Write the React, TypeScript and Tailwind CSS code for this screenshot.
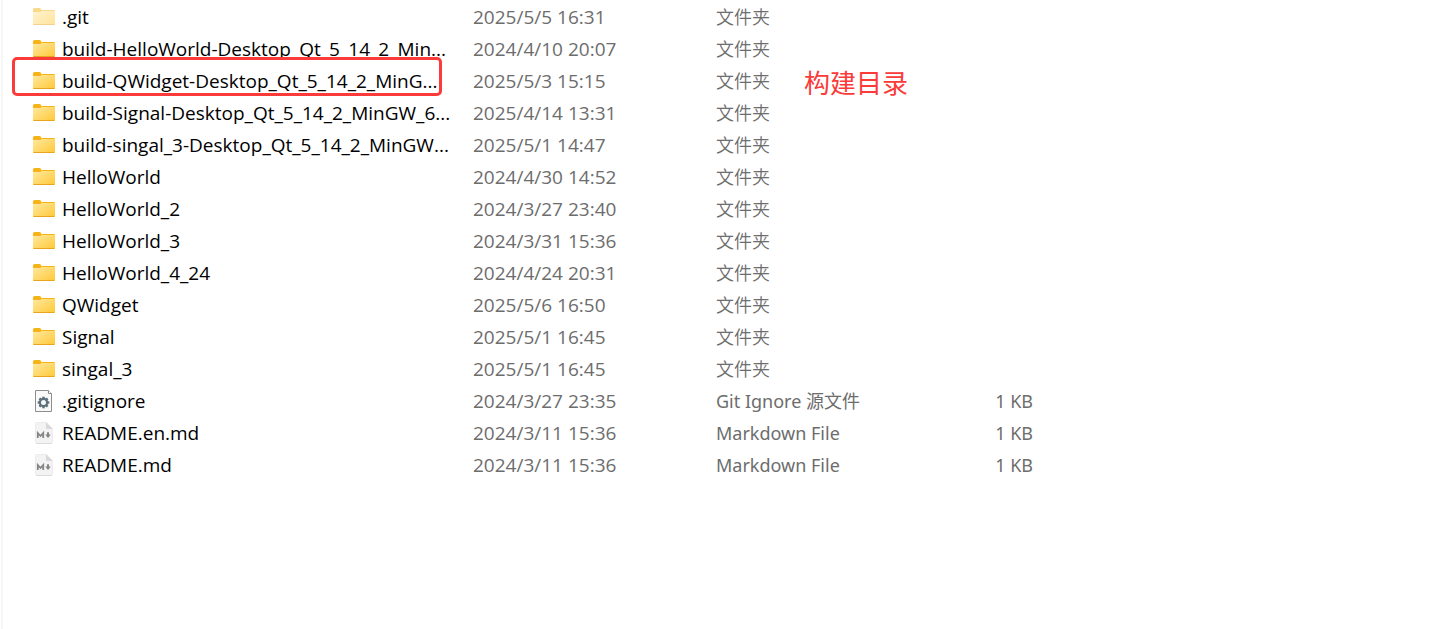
type Kind = "hidden-folder" | "folder" | "config" | "markdown";

interface Entry {
  name: string;
  date: string;
  type: string;
  size?: string;
  kind: Kind;
  note?: string;
}

const entries: Entry[] = [
  { name: ".git", date: "2025/5/5 16:31", type: "文件夹", kind: "hidden-folder" },
  { name: "build-HelloWorld-Desktop_Qt_5_14_2_Min...", date: "2024/4/10 20:07", type: "文件夹", kind: "folder" },
  { name: "build-QWidget-Desktop_Qt_5_14_2_MinG...", date: "2025/5/3 15:15", type: "文件夹", kind: "folder", note: "构建目录" },
  { name: "build-Signal-Desktop_Qt_5_14_2_MinGW_6...", date: "2025/4/14 13:31", type: "文件夹", kind: "folder" },
  { name: "build-singal_3-Desktop_Qt_5_14_2_MinGW...", date: "2025/5/1 14:47", type: "文件夹", kind: "folder" },
  { name: "HelloWorld", date: "2024/4/30 14:52", type: "文件夹", kind: "folder" },
  { name: "HelloWorld_2", date: "2024/3/27 23:40", type: "文件夹", kind: "folder" },
  { name: "HelloWorld_3", date: "2024/3/31 15:36", type: "文件夹", kind: "folder" },
  { name: "HelloWorld_4_24", date: "2024/4/24 20:31", type: "文件夹", kind: "folder" },
  { name: "QWidget", date: "2025/5/6 16:50", type: "文件夹", kind: "folder" },
  { name: "Signal", date: "2025/5/1 16:45", type: "文件夹", kind: "folder" },
  { name: "singal_3", date: "2025/5/1 16:45", type: "文件夹", kind: "folder" },
  { name: ".gitignore", date: "2024/3/27 23:35", type: "Git Ignore 源文件", size: "1 KB", kind: "config" },
  { name: "README.en.md", date: "2024/3/11 15:36", type: "Markdown File", size: "1 KB", kind: "markdown" },
  { name: "README.md", date: "2024/3/11 15:36", type: "Markdown File", size: "1 KB", kind: "markdown" },
];

function FolderIcon({ faded }: { faded: boolean }) {
  return (
    <svg width="22" height="22" viewBox="0 0 22 22" className={faded ? "opacity-50" : ""} aria-hidden="true">
      <defs>
        <linearGradient id="folder-front" x1="0" y1="0" x2="1" y2="1">
          <stop offset="0" stopColor="#ffe8a0" />
          <stop offset="1" stopColor="#ffc937" />
        </linearGradient>
      </defs>
      <path d="M0 3.5Q0 2 1.5 2H6.6Q7.4 2 7.9 2.9L8.3 4H20.8Q22 4 22 5V10H0Z" fill="#f5b417" />
      <path d="M0 6H7L8.6 5H22V17.6Q22 19 20.8 19H1.2Q0 19 0 17.6Z" fill="url(#folder-front)" />
      <path d="M0 17.4Q0 19 1.2 19H20.8Q22 19 22 17.4V17.6Q21.6 18 20.8 18H1.2Q.4 18 0 17.6Z" fill="#e8a51c" />
    </svg>
  );
}

function ConfigIcon() {
  const teeth = [0, 45, 90, 135, 180, 225, 270, 315];
  return (
    <svg width="22" height="22" viewBox="0 0 22 22" aria-hidden="true">
      <path d="M2.5 .5H15.5L18.5 3.5V21.5H2.5Z" fill="#f9f9f9" stroke="#8e8e8e" />
      <path d="M15.5 .5V3.5H18.5" fill="#fff" stroke="#8e8e8e" />
      <g transform="translate(10.5 12.5)" fill="#5d717c">
        {teeth.map((a) => (
          <rect key={a} x="-1.2" y="-5.8" width="2.4" height="2.4" transform={`rotate(${a})`} />
        ))}
        <circle r="3.6" fill="none" stroke="#5d717c" strokeWidth="2.2" />
      </g>
    </svg>
  );
}

function MarkdownIcon() {
  return (
    <svg width="22" height="22" viewBox="0 0 22 22" aria-hidden="true">
      <path d="M3.5 .5H13L19.5 7V19.7Q19.5 21.5 17.7 21.5H4.3Q2.5 21.5 2.5 19.7V1.5Q2.5 .5 3.5 .5Z" fill="#f3f3f3" stroke="#ececec" />
      <path d="M13 0L20 7H14.5Q13 7 13 5.5Z" fill="#d9d9d9" />
      <path d="M3 21.5H19" stroke="#dcdcdc" />
      <path d="M4.8 16V11L7.5 14L10.2 11V16" fill="none" stroke="#858585" strokeWidth="1.8" />
      <path d="M15 10.2V13.5" fill="none" stroke="#858585" strokeWidth="2" />
      <path d="M12.2 12.6H17.8L15 16Z" fill="#858585" />
    </svg>
  );
}

function EntryIcon({ kind }: { kind: Kind }) {
  if (kind === "config") return <ConfigIcon />;
  if (kind === "markdown") return <MarkdownIcon />;
  return <FolderIcon faded={kind === "hidden-folder"} />;
}

export default function App() {
  return (
    <main className="min-h-screen bg-white pl-px font-['Open_Sans','Noto_Sans_CJK_SC',sans-serif] text-[19px] leading-7 text-[#6d6d6d]">
      <div className="min-h-screen border-l-2 border-[#f7f7f7] pt-px">
        <table className="w-full table-fixed border-collapse text-left whitespace-nowrap">
          <colgroup>
            <col className="w-[470px]" />
            <col className="w-[243px]" />
            <col className="w-[200px]" />
            <col className="w-[117px]" />
            <col />
          </colgroup>
          <tbody>
            {entries.map((e) => (
              <tr key={e.name} className="h-8">
                <td className="relative p-0 pl-[30px]">
                  <div className="flex h-8 items-center gap-[7px] text-black">
                    <EntryIcon kind={e.kind} />
                    <span>{e.name}</span>
                  </div>
                  {e.note && (
                    <div className="absolute -top-2 left-[9px] h-[39px] w-[430px] rounded-[5px] border-3 border-[#fb3a3a]" />
                  )}
                </td>
                <td className="p-0">{e.date}</td>
                <td className="relative p-0 font-['Noto_Sans','Noto_Sans_CJK_SC',sans-serif] text-lg">
                  <span className={e.size ? "font-normal" : "font-[350]"}>{e.type}</span>
                  {e.note && (
                    <span className="absolute top-0 left-[88px] text-[26px] leading-9 text-[#fb3a3a]">{e.note}</span>
                  )}
                </td>
                <td className="p-0 text-right font-['Noto_Sans',sans-serif] text-lg">{e.size}</td>
                <td className="p-0" />
              </tr>
            ))}
          </tbody>
        </table>
      </div>
    </main>
  );
}
